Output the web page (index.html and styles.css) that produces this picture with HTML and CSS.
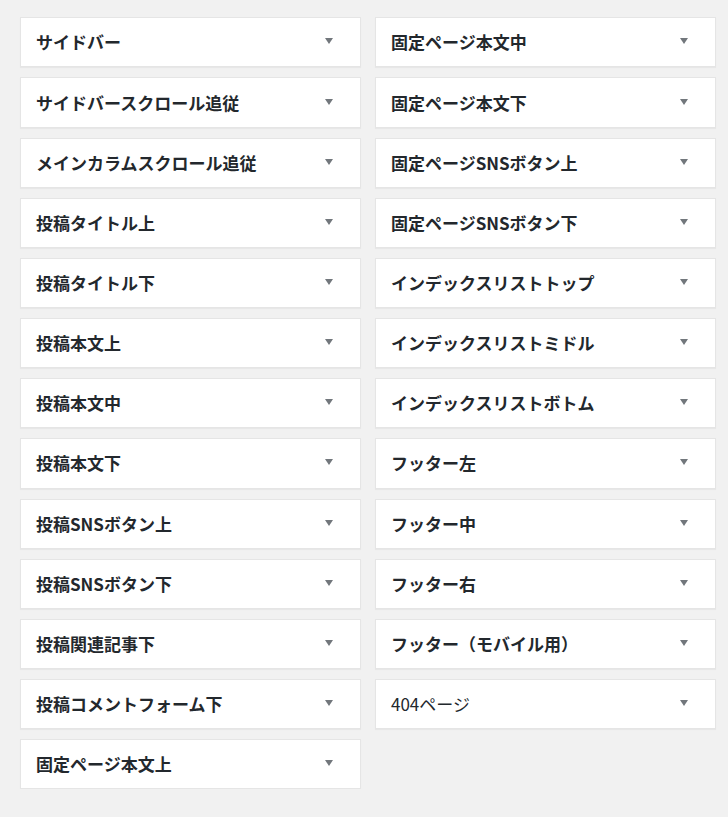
FILE: index.html
```html
<!DOCTYPE html>
<html lang="ja">
<head>
<meta charset="utf-8">
<title>Widgets</title>
<link rel="stylesheet" href="styles.css">
</head>
<body>
<div class="areas">
  <div class="col">
    <div class="area"><h2 class="name">サイドバー</h2><span class="arrow"></span></div>
    <div class="area"><h2 class="name">サイドバースクロール追従</h2><span class="arrow"></span></div>
    <div class="area"><h2 class="name">メインカラムスクロール追従</h2><span class="arrow"></span></div>
    <div class="area"><h2 class="name">投稿タイトル上</h2><span class="arrow"></span></div>
    <div class="area"><h2 class="name">投稿タイトル下</h2><span class="arrow"></span></div>
    <div class="area"><h2 class="name">投稿本文上</h2><span class="arrow"></span></div>
    <div class="area"><h2 class="name">投稿本文中</h2><span class="arrow"></span></div>
    <div class="area"><h2 class="name">投稿本文下</h2><span class="arrow"></span></div>
    <div class="area"><h2 class="name">投稿SNSボタン上</h2><span class="arrow"></span></div>
    <div class="area"><h2 class="name">投稿SNSボタン下</h2><span class="arrow"></span></div>
    <div class="area"><h2 class="name">投稿関連記事下</h2><span class="arrow"></span></div>
    <div class="area"><h2 class="name">投稿コメントフォーム下</h2><span class="arrow"></span></div>
    <div class="area"><h2 class="name">固定ページ本文上</h2><span class="arrow"></span></div>
  </div>
  <div class="col">
    <div class="area"><h2 class="name">固定ページ本文中</h2><span class="arrow"></span></div>
    <div class="area"><h2 class="name">固定ページ本文下</h2><span class="arrow"></span></div>
    <div class="area"><h2 class="name">固定ページSNSボタン上</h2><span class="arrow"></span></div>
    <div class="area"><h2 class="name">固定ページSNSボタン下</h2><span class="arrow"></span></div>
    <div class="area"><h2 class="name">インデックスリストトップ</h2><span class="arrow"></span></div>
    <div class="area"><h2 class="name">インデックスリストミドル</h2><span class="arrow"></span></div>
    <div class="area"><h2 class="name">インデックスリストボトム</h2><span class="arrow"></span></div>
    <div class="area"><h2 class="name">フッター左</h2><span class="arrow"></span></div>
    <div class="area"><h2 class="name">フッター中</h2><span class="arrow"></span></div>
    <div class="area"><h2 class="name">フッター右</h2><span class="arrow"></span></div>
    <div class="area"><h2 class="name">フッター（モバイル用）</h2><span class="arrow"></span></div>
    <div class="area"><h2 class="name name-light">404ページ</h2><span class="arrow"></span></div>
  </div>
</div>
</body>
</html>
```
FILE: styles.css
```css
html, body {
  margin: 0;
  padding: 0;
  background: #f1f1f1;
}
body {
  font-family: "Noto Sans CJK JP", "Noto Sans", sans-serif;
  color: #23282d;
}
.areas {
  display: grid;
  grid-template-columns: 341px 341px;
  column-gap: 14px;
  padding: 17.3px 12px 0 20px;
  align-items: start;
}
.col {
  display: flex;
  flex-direction: column;
  gap: 10px;
}
.area {
  box-sizing: border-box;
  height: 50.17px;
  background: #fff;
  border: 1px solid #e5e5e5;
  box-shadow: 0 1px 1px rgba(0, 0, 0, 0.04);
  display: flex;
  align-items: center;
  padding: 0 27px 0 15px;
}
.name {
  margin: 0;
  flex: 1;
  font-size: 17px;
  font-weight: 700;
  line-height: 20px;
  white-space: nowrap;
}
.name-light {
  font-weight: 400;
}
.arrow {
  width: 0;
  height: 0;
  border-left: 4px solid transparent;
  border-right: 4px solid transparent;
  border-top: 6px solid #72777c;
  margin-top: -2px;
}
```
